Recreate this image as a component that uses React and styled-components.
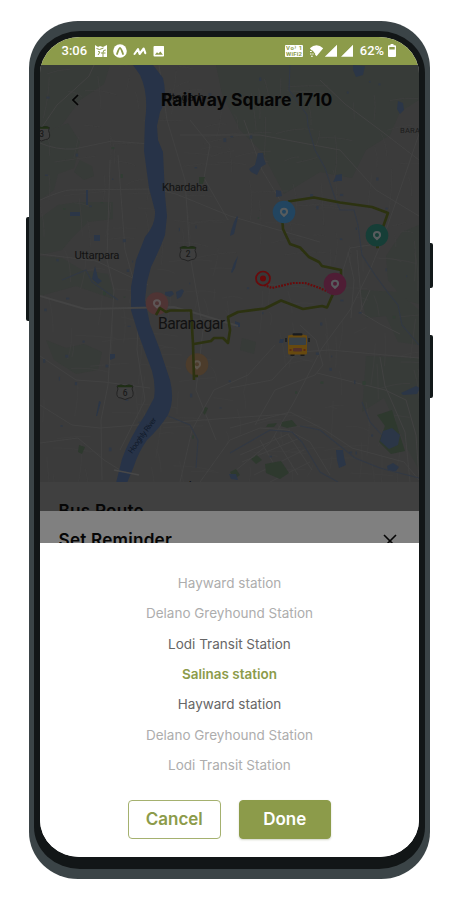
import React from "react";
import styled, { createGlobalStyle, css } from "styled-components";

const GlobalStyle = createGlobalStyle`
  * { box-sizing: border-box; }
  body { margin: 0; background: #fff; font-family: Inter, "Open Sans", sans-serif; }
`;

const Stage = styled.main`
  position: relative;
  width: 460px;
  height: 900px;
  padding: 21px 30px 21px 29px;
  overflow: hidden;
`;

const SideKey = styled.i`
  position: absolute;
  left: ${(p) => p.$x}px;
  top: ${(p) => p.$y}px;
  width: 5px;
  height: ${(p) => p.$h}px;
  border-radius: 2px;
  background: #121819;
`;

const Shell = styled.div`
  position: relative;
  height: 858px;
  padding: 10px 5px;
  border-radius: 49px / 47px;
  background: #3b4447;
`;

const Bezel = styled.div`
  height: 838px;
  padding: 6px 6px 12px;
  border-radius: 46px / 42px;
  background: #121617;
`;

const Screen = styled.div`
  display: flex;
  flex-direction: column;
  height: 820px;
  overflow: hidden;
  border-radius: 40px / 37px;
  background: #fff;
`;

const StatusBar = styled.header`
  flex: 0 0 28px;
  display: flex;
  justify-content: space-between;
  align-items: center;
  padding: 0 23px 1px 21.5px;
  background: #8c9b4a;
  color: #fff;
  font: 500 13px/16px Roboto, sans-serif;
`;

const StatusGroup = styled.div`
  display: flex;
  align-items: center;
  gap: ${(p) => p.$gap}px;
  svg { display: block; }
`;

const Percent = styled.span`
  margin: 0 1px 0 2px;
  font-size: 12.9px;
`;

const MapPanel = styled.section`
  position: relative;
  flex: 0 0 417px;
  overflow: hidden;
  background: #3b3b3b;
`;

const MapDrawing = styled.svg`
  display: block;
  width: 379px;
  height: 418px;
  font-family: Roboto, sans-serif;
`;

const MapHeader = styled.div`
  position: absolute;
  inset: 0 0 auto;
  height: 69px;
  display: grid;
  grid-template-columns: 70px 1fr 50px;
  align-items: center;
  color: #050505;
`;

const BackIcon = styled.svg`
  justify-self: center;
`;

const Title = styled.h1`
  margin: 0 0 0 51px;
  white-space: nowrap;
  font-size: 17.5px;
  font-weight: 700;
  letter-spacing: -0.05px;
`;

const SheetEdge = styled.section`
  flex: 0 0 ${(p) => p.$height}px;
  display: flex;
  justify-content: space-between;
  align-items: flex-start;
  padding: 18px 22px 0 18.5px;
  overflow: hidden;
  background: ${(p) => p.$tone};
  color: #060606;
`;

const SheetTitle = styled.h2`
  margin: 0;
  font-size: 17.2px;
  line-height: 21px;
  font-weight: 600;
  letter-spacing: 0.2px;
`;

const Picker = styled.section`
  flex: 1;
  display: flex;
  flex-direction: column;
  align-items: center;
  padding-top: 25px;
  background: #fff;
`;

const StationList = styled.ul`
  margin: 0;
  padding: 0;
  list-style: none;
`;

const tones = { far: "#adadad", near: "#666", active: "#8c9b4a" };

const Station = styled.li`
  height: 30.35px;
  line-height: 30.35px;
  text-align: center;
  font-size: 13.5px;
  font-weight: ${(p) => (p.$state === "active" ? 600 : 400)};
  color: ${(p) => tones[p.$state]};
`;

const Actions = styled.div`
  display: flex;
  gap: 18px;
  margin-top: 20px;
`;

const Button = styled.button`
  width: 92.5px;
  height: 39px;
  padding: 0;
  border: 1px solid #a5b16f;
  border-radius: 4px;
  background: #fff;
  color: #8c9b4a;
  font: 600 17px/37px Inter, sans-serif;
  ${(p) =>
    p.$filled &&
    css`
      border-color: #8c9b4a;
      background: #8c9b4a;
      color: #fff;
      box-shadow: 0 1px 2px rgba(80, 90, 40, 0.25);
    `}
`;

const stations = [
  ["Hayward station", "far"],
  ["Delano Greyhound Station", "far"],
  ["Lodi Transit Station", "near"],
  ["Salinas station", "active"],
  ["Hayward station", "near"],
  ["Delano Greyhound Station", "far"],
  ["Lodi Transit Station", "far"],
];

/* Small repeatable number source for side streets and ponds. */
function sequence(seed) {
  let s = seed;
  return () => {
    s = (s * 16807) % 2147483647;
    return s / 2147483647;
  };
}

const rnd = sequence(71);
const streets = Array.from({ length: 250 }, () => {
  const x = 40 + rnd() * 380;
  const y = 65 + rnd() * 418;
  const upright = rnd() > 0.5;
  const len = 12 + rnd() * 32;
  const drift = (rnd() - 0.5) * 12;
  const [dx, dy] = upright ? [drift, len] : [len, drift];
  return `M${x.toFixed(1)} ${y.toFixed(1)}q${(dx / 2 + rnd() * 4).toFixed(1)} ${(dy / 2 - rnd() * 4).toFixed(1)} ${dx.toFixed(1)} ${dy.toFixed(1)}`;
}).join("");

const ponds = Array.from({ length: 75 }, () => ({
  x: 42 + rnd() * 374,
  y: 70 + rnd() * 400,
  w: 1 + rnd() * 2.5,
  h: 1 + rnd() * 3,
  green: rnd() > 0.75,
}));

const greens = [
  "M40 65H110L104 84 80 100 62 125 40 135Z",
  "M40 135L68 123 80 142 74 168 58 174 54 190 40 200Z",
  "M58 205L78 202H113V219L88 222 72 238 62 250 40 255V218Z",
  "M40 256L62 258 82 270 108 274 116 300 76 286 40 296Z",
  "M46 340L66 348 84 344 102 352 98 370 76 374 54 360Z",
  "M80 160l12 6 2 10-10 4-10-8Z",
  "M216 65H419V100L400 112 390 135 366 150 352 178 320 172 284 194 262 152 240 130 222 94Z",
  "M419 225L402 232 386 256 388 280 404 300 419 304Z",
  "M360 290L398 292 419 310V345L398 342 386 316 366 318Z",
  "M366 356L419 358V470L408 450 384 398 362 412Z",
  "M242 338l14 4-2 12-14-4Z",
];

const parks = [
  "M377 415l15-5 13 41-14 3-12-12 6-16Z",
  "M265 464l16-3 8 12-9 6-14-6Z",
  "M282 422l10-2 5 6-10 2-6-2Z",
  "M268 424l9-1-3 4h-8Z",
  "M251 459l6-4 5 5-6 4Z",
  "M230 472l6-3 4 6-6 4Z",
  "M199 177h6l-2 7h-4Z",
  "M79 445l6 2-3 7-4-2Z",
  "M205 407l3 1-3 7-2-2Z",
];

const lakes = [
  "M258 153h5l1 6 2 5-5 3-4 8-6-3-2-3 6-4Z",
  "M276 190l5 1 1 5-6 1Z",
  "M353 65l12 1-2 9-7 2-3-7Z",
  "M398 101l5 2 1 7-4 4-3-5Z",
  "M336 175l6-1v7h-4l-5 1 2-4Z",
  "M383 431l9-3 8 7-2 10-9 4-9-8Z",
  "M336 450h7l1 7 2 8-7 3-2-8Z",
  "M401 393l15-7 4 2-3 6-14 1Z",
  "M387 466l6-3 6 4-3 4h-8Z",
  "M94 235h6v6h-6Z",
  "M70 212h10v4H70Z",
  "M86 190h2v15h-2Z",
  "M231 231l3-9 3-6 1 1-4 17-4 2Z",
  "M231 272l3-9 4-7-3 12-3 5Z",
  "M95 266l3 12 4 3-4 3-6-5Z",
  "M165 292l7-1 2 3-4 3-5-2Z",
  "M176 292l6-3 2 2-3 6-4 2Z",
  "M99 401l2 1-4 14h-1Z",
  "M110 354h5v4l-5 2Z",
  "M280 339h4l-1 4h-4Z",
  "M235 321l5 2v4h-5Z",
  "M229 474l7 0 2 6-7-1Z",
];

const roads = [
  "M40 200Q63 190 70 190L155 189 176 194 230 216 320 242",
  "M40 143Q56 150 74 149L112 141 150 144",
  "M40 130L57 105 76 88 89 76 94 65",
  "M40 254L96 261 148 285",
  "M159 65L167 120 185 180 190 255 203 330 196 390 216 440",
  "M180 135H260L340 150 376 190 419 216",
  "M190 120L210 145 204 178 228 220",
  "M244 120L262 170 280 200",
  "M320 80L345 104 380 130 419 160",
  "M419 134L400 190 384 236 370 270 350 310 322 348 294 402 270 443 230 475",
  "M230 388L272 380 298 352 330 350 419 358",
  "M317 373L385 390 406 400 416 435 419 480",
  "M380 357L385 386 405 432 410 482",
  "M343 290V270L350 248 376 244M348 252L354 280 351 318M357 250L362 310",
  "M110 160L107 260 114 290 108 385 101 420 102 480",
  "M118 155L125 250 139 300 137 350 145 400 120 450",
  "M40 405L72 425 100 428 150 424 230 418 288 414",
  "M40 443L78 438 104 460 128 475",
  "M180 482L192 430 214 390 248 375 275 345",
  "M200 482L230 440 260 428 288 430 310 442 330 475",
  "M230 428L290 412 325 430 352 448 404 462 419 480",
  "M40 356L76 380 104 382 150 388",
  "M300 325L316 340 323 365 315 375 275 390 255 425",
  "M370 290L360 312 380 324 400 334",
  "M240 455L288 434M242 462L300 438M254 475L304 450M270 482L310 462M260 440L282 478M274 436L298 475M288 434L312 470",
];

const route =
  "M376 247H379M383 227L388 213 372 207 340 202.5 314 197.5 288 201.5M282.5 222L283 229 290 244 300 247.5 309 257 319 262 322 266 341 270V278M333 294L327 307.5 322 306 303 309 281 300.5 265 308.5 238 312 228 317 230 330 228 343 223 338H214L211 341 194 344M156 315L160 308 166 312 170 310.5H191L193 344 194 380 M193 376H198";

function Pin({ x, y, fill, glyph = "#585c5e" }) {
  return (
    <g transform={`translate(${x} ${y})`}>
      <circle r="11.3" fill={fill} />
      <path
        d="M0 5.2C-1.6 3.4-4.1 2.3-4.1-.2a4.1 4.1 0 0 1 8.2 0C4.1 2.3 1.6 3.4 0 5.2Z"
        fill={glyph}
      />
      <circle cy="-.2" r="2" fill={fill} />
    </g>
  );
}

function Shield({ x, y, label }) {
  return (
    <g transform={`translate(${x} ${y})`}>
      <path
        d="M-8-6Q-4-8 0-6 4-8 8-6 6-3 8 0 9 6 4 6L0 7.5-4 6Q-9 6-8 0-6-3-8-6Z"
        fill="#3e3e3e"
        stroke="#242424"
        strokeWidth="1"
      />
      <path d="M-7.5-6.3Q-4-8 0-6.3 4-8 7.5-6.3V-4.8H-7.5Z" fill="#1f2f15" />
      <text y="3.8" textAnchor="middle" fontSize="8.3" fontWeight="500" fill="#1a1a1a">
        {label}
      </text>
    </g>
  );
}

function Bus() {
  return (
    <g transform="translate(297.5 345)">
      <path d="M-7 9h4v2h-4zM3 9h4v2H3z" fill="#1c1c1c" />
      <path d="M-9.5-9.5Q0-12 9.5-9.5V8Q9.5 9.5 8 9.5H-8Q-9.5 9.5-9.5 8Z" fill="#67490f" />
      <rect x="-5" y="-11.8" width="10" height="2.3" rx="1" fill="#191b1f" />
      <rect x="-8.5" y="-7.5" width="17" height="7.5" rx="1" fill="#374047" />
      <rect x="-4.5" y="3" width="9" height="3.5" rx="1" fill="#502f2b" />
      <path d="M-11.5-7v4M11.5-7v4" stroke="#1c1e20" strokeWidth="1.6" />
      <path d="M-8 5h2M6 5h2" stroke="#5a2014" strokeWidth="1.6" />
    </g>
  );
}

function CityMap() {
  return (
    <MapDrawing viewBox="40 65 379 418">
      <g fill="#373b38">{greens.map((d) => <path key={d} d={d} />)}</g>
      <path d={streets} fill="none" stroke="#3f3f3f" strokeWidth=".7" />
      <g fill="none" stroke="#424242" strokeWidth="1">
        {roads.map((d) => <path key={d} d={d} />)}
      </g>
      {ponds.map((p) => (
        <rect
          key={`${p.x}`}
          x={p.x}
          y={p.y}
          width={p.w}
          height={p.h}
          fill={p.green ? "#313e34" : "#303844"}
        />
      ))}
      <g fill="#2e392e">{parks.map((d) => <path key={d} d={d} />)}</g>
      <g fill="#2b3647">{lakes.map((d) => <path key={d} d={d} />)}</g>
      <g fill="none" stroke="#323944" strokeWidth="1.1">
        <path d="M290 65L289 90 307 115 308 126 315 150 325 168 335 198 340 210 354 210 358 225 362 255 375 275 389 294 398 305 402 325 419 345" />
        <path d="M230 453L270 430 292 432 302 442 320 472 338 482M168 416L190 425 198 440 196 468M300 426L320 430 355 458 380 468 419 478M362 402L370 422 382 435M62 280L86 270 92 282 118 300" />
      </g>
      <path d="M161 215L158 235 147 265 140 285 136 280 145 245Z" fill="#303b35" />
      <path
        d="M133 65H153L163 78Q168 98 160 112L157 126 158 140 163 152 165 195 167 216 165 235Q160 249 151 267L147 282 145 300 150 324 160 350 170 380Q175 400 168 415 159 429 147 440 138 453 134 466L127 483H116L122 459Q129 439 145 415L154 398Q156 385 152 371L138 333 131 310V287L136 260 145 237Q156 224 155 211L149 188 144 151 145 121Q149 94 140 75Z"
        fill="#273348"
      />
      <path d="M40 296L85 309 174 307 202 315 238 326" fill="none" stroke="#444" strokeWidth="1.9" />
      <path d="M114 470L139 475" stroke="#484848" strokeWidth="1.7" />
      <Pin x={157} y={303.5} fill="#4f3434" glyph="#5e5656" />
      <Pin x={197} y={364.5} fill="#4c3c2b" glyph="#5c544a" />
      <path d={route} fill="none" stroke="#2c3210" strokeWidth="2.6" strokeLinejoin="round" />
      <path
        d="M264 285L272 288 293 283H305L317 287 329 292"
        fill="none"
        stroke="#690a0b"
        strokeWidth="2.2"
        strokeDasharray="1.8 1.2"
      />
      <Pin x={284} y={212} fill="#224560" />
      <Pin x={377} y={235.3} fill="#163e37" />
      <Pin x={335} y={284} fill="#4f1d35" />
      <circle cx="263" cy="278.5" r="7" fill="#383838" stroke="#690a0b" strokeWidth="1.7" />
      <circle cx="263" cy="278.5" r="3" fill="#690a0b" />
      <Bus />
      <Shield x={188} y={253.5} label="2" />
      <Shield x={125} y={392} label="6" />
      <Shield x={41.5} y={133.5} label="3" />
      <g fill="#121212">
        <text x="162" y="101" fontSize="11.5" textLength="42">Titagarh</text>
        <text x="162" y="191" fontSize="11.3" textLength="46">Khardaha</text>
        <text x="74.5" y="259" fontSize="11.3" textLength="45">Uttarpara</text>
        <text x="158" y="328.7" fontSize="15.7" textLength="67">Baranagar</text>
        <text x="400" y="133" fontSize="7.6" fill="#1c1c1c" letterSpacing=".2">BARASAT</text>
        <text x="151" y="490.8" fontSize="13">Howrah</text>
        <text fontSize="7.6" fill="#111a28" transform="translate(132 454) rotate(-54)" textLength="42">
          Hooghly River
        </text>
      </g>
    </MapDrawing>
  );
}

function NoticeIcons() {
  return (
    <svg width="69" height="14" viewBox="0 0 69 14" fill="#fff">
      <path d="M0 1l3 2 2-1 3 1 4-2v12H0z" />
      <path d="M1.5 4.5l3 1 4-1.5M10.8 6Q8 5.6 8 8.6V13M6 9h4.5M3 7.5l2 .5-2 3" fill="none" stroke="#8c9b4a" strokeWidth="1" />
      <circle cx="25" cy="7" r="6.8" />
      <path d="M22 10Q24 4 25 4T28 10" fill="none" stroke="#8c9b4a" strokeWidth="1.8" strokeLinecap="round" />
      <path d="M39.5 10L43 5.2 44.6 10 48.7 4.5 50.3 9.2" fill="none" stroke="#fff" strokeWidth="2.1" strokeLinecap="round" strokeLinejoin="round" />
      <path fillRule="evenodd" d="M59.5 2h8.7q1 0 1 1v8.4q0 1-1 1h-8.7q-1 0-1-1V3q0-1 1-1zm.4 8.7h8l-2.5-3.3-2 2.2-1.4-1.3z" />
    </svg>
  );
}

function SignalIcons() {
  return (
    <svg width="70" height="14" viewBox="0 0 70 14" fill="#fff">
      <rect y="1" width="18" height="12" rx="1" />
      <g fill="#8c9b4a" fontFamily="Roboto, sans-serif" fontWeight="700" fontSize="6">
        <text x="1" y="6.4" textLength="10">Vo⁾</text>
        <text x="13.8" y="6.4">1</text>
        <text x="1" y="12.2" textLength="16">WiFi2</text>
      </g>
      <path d="M24.8 4.2Q31.5-1.6 38.2 4.2L31.5 12.2Z" />
      <path d="M24 6.5h3.6l2.4 3V13h-6z" fill="#8c9b4a" />
      <path d="M25 7.5h1.8M25 10h1.5M27.3 10h1.3M26 12.3h1.8" stroke="#fff" strokeWidth="1.1" />
      <path d="M39.8 12.7L52 .8V12.7ZM56 12.7L68 .8V12.7Z" />
    </svg>
  );
}

function BatteryIcon() {
  return (
    <svg width="8" height="13" viewBox="0 0 8 13">
      <path fill="#fff" fillRule="evenodd" d="M2.5 0h3v1.3H7q1 0 1 1V12q0 1-1 1H1q-1 0-1-1V2.3q0-1 1-1h1.5zM1.3 3v2.4h5.4V3z" />
    </svg>
  );
}

export default function App() {
  return (
    <Stage>
      <GlobalStyle />
      <SideKey $x={26} $y={217} $h={104} />
      <SideKey $x={428} $y={243} $h={45} />
      <SideKey $x={428} $y={335} $h={63} />
      <Shell>
        <Bezel>
          <Screen>
            <StatusBar>
              <StatusGroup $gap={8}>
                <span>3:06</span>
                <NoticeIcons />
              </StatusGroup>
              <StatusGroup $gap={3}>
                <SignalIcons />
                <Percent>62%</Percent>
                <BatteryIcon />
              </StatusGroup>
            </StatusBar>
            <MapPanel>
              <CityMap />
              <MapHeader>
                <BackIcon width="7" height="12" viewBox="0 0 7 12">
                  <path d="M6 1L1 6l5 5" fill="none" stroke="#050505" strokeWidth="1.7" />
                </BackIcon>
                <Title>Railway Square 1710</Title>
              </MapHeader>
            </MapPanel>
            <SheetEdge $height={29} $tone="#404040">
              <SheetTitle>Bus Route</SheetTitle>
            </SheetEdge>
            <SheetEdge $height={32} $tone="#808080">
              <SheetTitle>Set Reminder</SheetTitle>
              <svg width="14" height="14" viewBox="0 0 14 14">
                <path d="M1 6L13 18M13 6L1 18" stroke="#060606" strokeWidth="1.6" />
              </svg>
            </SheetEdge>
            <Picker>
              <StationList>
                {stations.map(([name, state], i) => (
                  <Station key={i} $state={state}>{name}</Station>
                ))}
              </StationList>
              <Actions>
                <Button>Cancel</Button>
                <Button $filled>Done</Button>
              </Actions>
            </Picker>
          </Screen>
        </Bezel>
      </Shell>
    </Stage>
  );
}
